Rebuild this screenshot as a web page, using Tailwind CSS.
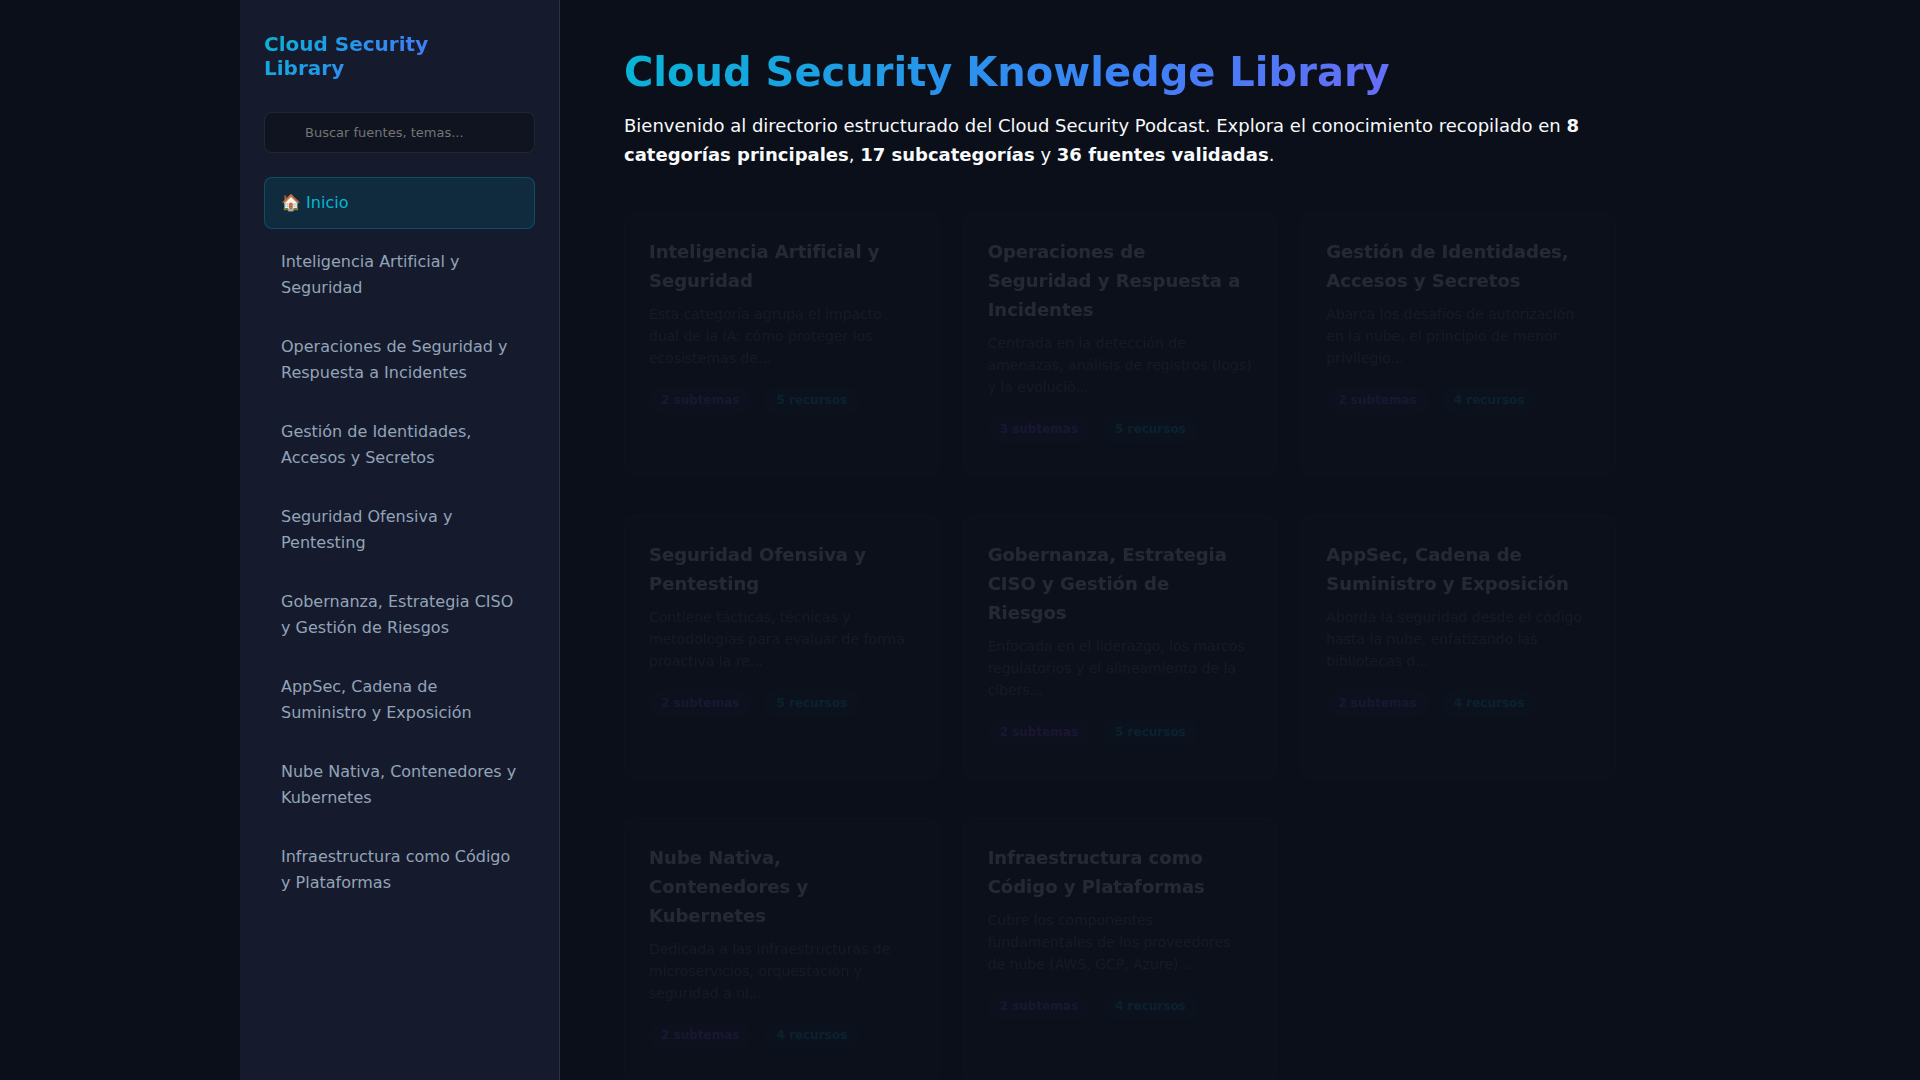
<!DOCTYPE html>
<html lang="es">
<head>
    <meta charset="UTF-8">
    <meta name="viewport" content="width=device-width, initial-scale=1.0">
    <title>Cloud Security Knowledge Library</title>
    <script src="https://cdn.jsdelivr.net/npm/@tailwindcss/browser@4"></script>
</head>
<body class="bg-[#0b0f19] text-slate-50 font-['DejaVu_Sans',sans-serif]">
    <div class="flex max-w-[1440px] min-h-screen mx-auto">
        <aside class="sticky top-0 w-80 h-screen shrink-0 px-6 py-8 bg-[#151b2d] border-r border-white/10">
            <h2 class="mb-8 text-xl leading-6 font-bold text-transparent bg-clip-text bg-[linear-gradient(135deg,#06b6d4,#3b82f6,#8b5cf6)]">Cloud Security<br>Library</h2>
            <label for="search" class="sr-only">Buscar</label>
            <input type="text" id="search" placeholder="Buscar fuentes, temas..." class="block w-full h-[41px] mb-6 pl-10 pr-4 text-[13px] rounded-lg bg-[#0f1420] border border-white/8 placeholder-[#757575]">
            <nav class="flex flex-col gap-[7px] leading-[26px] text-[#94a3b8]">
                <a href="#" class="px-4 py-3 rounded-lg border border-cyan-500/25 bg-[#112b3e] text-[#06b6d4]">🏠 Inicio</a>
                <a href="#ia" class="px-4 py-3 rounded-lg border border-transparent">Inteligencia Artificial y Seguridad</a>
                <a href="#operaciones" class="px-4 py-3 rounded-lg border border-transparent">Operaciones de Seguridad y Respuesta a Incidentes</a>
                <a href="#identidades" class="px-4 py-3 rounded-lg border border-transparent">Gestión de Identidades, Accesos y Secretos</a>
                <a href="#ofensiva" class="px-4 py-3 rounded-lg border border-transparent">Seguridad Ofensiva y Pentesting</a>
                <a href="#gobernanza" class="px-4 py-3 rounded-lg border border-transparent">Gobernanza, Estrategia CISO y Gestión de Riesgos</a>
                <a href="#appsec" class="px-4 py-3 rounded-lg border border-transparent">AppSec, Cadena de Suministro y Exposición</a>
                <a href="#nube" class="px-4 py-3 rounded-lg border border-transparent">Nube Nativa, Contenedores y Kubernetes</a>
                <a href="#iac" class="px-4 py-3 rounded-lg border border-transparent">Infraestructura como Código y Plataformas</a>
            </nav>
        </aside>

        <main class="flex-1 px-16 py-12">
            <h1 class="mb-[15px] text-[40px] leading-12 font-bold text-transparent bg-clip-text bg-[linear-gradient(135deg,#06b6d4,#3b82f6,#8b5cf6)]">Cloud Security Knowledge Library</h1>
            <p class="mb-[43px] text-lg leading-[29px]">Bienvenido al directorio estructurado del Cloud Security Podcast. Explora el conocimiento recopilado en <strong>8 categorías principales</strong>, <strong>17 subcategorías</strong> y <strong>36 fuentes validadas</strong>.</p>

            <!-- Category cards, still fading in -->
            <div class="grid grid-cols-3 gap-x-6 gap-y-[39px]">
                <article class="p-6 rounded-xl border border-white/10 bg-[#151b2d] opacity-11">
                    <h3 class="mb-2 text-lg leading-[29px] font-bold">Inteligencia Artificial y Seguridad</h3>
                    <p class="mb-[18px] text-sm leading-[22px] text-slate-500">Esta categoría agrupa el impacto dual de la IA: cómo proteger los ecosistemas de...</p>
                    <div class="flex gap-[13px] mb-2 text-xs leading-[19px] font-bold">
                        <span class="px-3 py-1 rounded-full bg-violet-500/10 text-violet-500">2 subtemas</span>
                        <span class="px-3 py-1 rounded-full bg-cyan-500/10 text-cyan-500">5 recursos</span>
                    </div>
                </article>
                <article class="p-6 rounded-xl border border-white/10 bg-[#151b2d] opacity-11">
                    <h3 class="mb-2 text-lg leading-[29px] font-bold">Operaciones de Seguridad y Respuesta a Incidentes</h3>
                    <p class="mb-[18px] text-sm leading-[22px] text-slate-500">Centrada en la detección de amenazas, análisis de registros (logs) y la evolució...</p>
                    <div class="flex gap-[13px] mb-2 text-xs leading-[19px] font-bold">
                        <span class="px-3 py-1 rounded-full bg-violet-500/10 text-violet-500">3 subtemas</span>
                        <span class="px-3 py-1 rounded-full bg-cyan-500/10 text-cyan-500">5 recursos</span>
                    </div>
                </article>
                <article class="p-6 rounded-xl border border-white/10 bg-[#151b2d] opacity-11">
                    <h3 class="mb-2 text-lg leading-[29px] font-bold">Gestión de Identidades, Accesos y Secretos</h3>
                    <p class="mb-[18px] text-sm leading-[22px] text-slate-500">Abarca los desafíos de autorización en la nube, el principio de menor privilegio...</p>
                    <div class="flex gap-[13px] mb-2 text-xs leading-[19px] font-bold">
                        <span class="px-3 py-1 rounded-full bg-violet-500/10 text-violet-500">2 subtemas</span>
                        <span class="px-3 py-1 rounded-full bg-cyan-500/10 text-cyan-500">4 recursos</span>
                    </div>
                </article>
                <article class="p-6 rounded-xl border border-white/10 bg-[#151b2d] opacity-11">
                    <h3 class="mb-2 text-lg leading-[29px] font-bold">Seguridad Ofensiva y Pentesting</h3>
                    <p class="mb-[18px] text-sm leading-[22px] text-slate-500">Contiene tácticas, técnicas y metodologías para evaluar de forma proactiva la re...</p>
                    <div class="flex gap-[13px] mb-2 text-xs leading-[19px] font-bold">
                        <span class="px-3 py-1 rounded-full bg-violet-500/10 text-violet-500">2 subtemas</span>
                        <span class="px-3 py-1 rounded-full bg-cyan-500/10 text-cyan-500">5 recursos</span>
                    </div>
                </article>
                <article class="p-6 rounded-xl border border-white/10 bg-[#151b2d] opacity-11">
                    <h3 class="mb-2 text-lg leading-[29px] font-bold">Gobernanza, Estrategia CISO y Gestión de Riesgos</h3>
                    <p class="mb-[18px] text-sm leading-[22px] text-slate-500">Enfocada en el liderazgo, los marcos regulatorios y el alineamiento de la cibers...</p>
                    <div class="flex gap-[13px] mb-2 text-xs leading-[19px] font-bold">
                        <span class="px-3 py-1 rounded-full bg-violet-500/10 text-violet-500">2 subtemas</span>
                        <span class="px-3 py-1 rounded-full bg-cyan-500/10 text-cyan-500">5 recursos</span>
                    </div>
                </article>
                <article class="p-6 rounded-xl border border-white/10 bg-[#151b2d] opacity-11">
                    <h3 class="mb-2 text-lg leading-[29px] font-bold">AppSec, Cadena de Suministro y Exposición</h3>
                    <p class="mb-[18px] text-sm leading-[22px] text-slate-500">Aborda la seguridad desde el código hasta la nube, enfatizando las bibliotecas d...</p>
                    <div class="flex gap-[13px] mb-2 text-xs leading-[19px] font-bold">
                        <span class="px-3 py-1 rounded-full bg-violet-500/10 text-violet-500">2 subtemas</span>
                        <span class="px-3 py-1 rounded-full bg-cyan-500/10 text-cyan-500">4 recursos</span>
                    </div>
                </article>
                <article class="p-6 rounded-xl border border-white/10 bg-[#151b2d] opacity-11">
                    <h3 class="mb-2 text-lg leading-[29px] font-bold">Nube Nativa, Contenedores y Kubernetes</h3>
                    <p class="mb-[18px] text-sm leading-[22px] text-slate-500">Dedicada a las infraestructuras de microservicios, orquestación y seguridad a ni...</p>
                    <div class="flex gap-[13px] mb-2 text-xs leading-[19px] font-bold">
                        <span class="px-3 py-1 rounded-full bg-violet-500/10 text-violet-500">2 subtemas</span>
                        <span class="px-3 py-1 rounded-full bg-cyan-500/10 text-cyan-500">4 recursos</span>
                    </div>
                </article>
                <article class="p-6 rounded-xl border border-white/10 bg-[#151b2d] opacity-11">
                    <h3 class="mb-2 text-lg leading-[29px] font-bold">Infraestructura como Código y Plataformas</h3>
                    <p class="mb-[18px] text-sm leading-[22px] text-slate-500">Cubre los componentes fundamentales de los proveedores de nube (AWS, GCP, Azure)...</p>
                    <div class="flex gap-[13px] mb-2 text-xs leading-[19px] font-bold">
                        <span class="px-3 py-1 rounded-full bg-violet-500/10 text-violet-500">2 subtemas</span>
                        <span class="px-3 py-1 rounded-full bg-cyan-500/10 text-cyan-500">4 recursos</span>
                    </div>
                </article>
            </div>
        </main>
    </div>
</body>
</html>
